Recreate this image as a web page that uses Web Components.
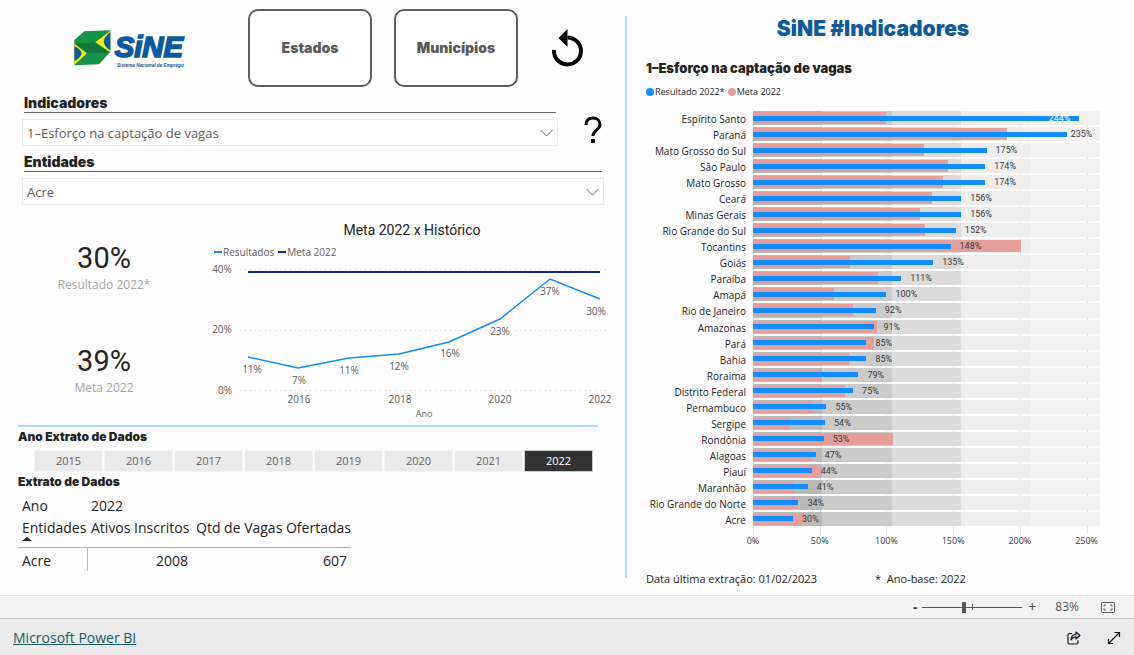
<!DOCTYPE html>
<html lang="pt-BR">
<head>
<meta charset="utf-8">
<meta name="viewport" content="width=device-width, initial-scale=1">
<title>SiNE #Indicadores</title>
<style>
  body { margin: 0; background: #fdfdfd; color: #252423; font-family: "Open Sans", "Noto Sans", sans-serif; }
</style>
</head>
<body>
<sine-app></sine-app>

<script>
const HEAD = '"Inter", "Liberation Sans", sans-serif';
const DIN = '"Roboto", sans-serif';

function define(name, render) {
  customElements.define(name, class extends HTMLElement {
    connectedCallback() {
      if (this.shadowRoot) return;
      const template = document.createElement('template');
      template.innerHTML = render(this);
      this.attachShadow({ mode: 'open' }).append(template.content.cloneNode(true));
    }
  });
}

/* ---------- Logo ---------- */
define('sine-logo', () => `
<style>
  :host { display: block; width: 116px; }
  svg { display: block; width: 100%; }
</style>
<svg viewBox="0 0 348 120" role="img" aria-label="SiNE">
  <path fill="#149247" d="M4 36 34 10 112 7V71L78 109 4 112Z"/>
  <path fill="#0d7a3c" d="M4 47 66 43 112 74 42 76Z"/>
  <path fill="#f6ea14" d="M4 47 42 76 4 111Z"/>
  <path fill="#f6ea14" d="M112 8 67 43 112 73Z"/>
  <path fill="#0b5aa0" d="M4 55Q24 64 26 77 22 90 4 99Z"/>
  <path fill="#0b5aa0" d="M112 12Q94 25 92 42 96 58 112 67Z"/>
  <text x="125" y="86" font-family="Liberation Sans" font-weight="700" font-style="italic" font-size="88" fill="#0b5aa0" stroke="#0b5aa0" stroke-width="5">SiNE</text>
  <text x="132" y="117" font-family="Liberation Sans" font-weight="700" font-style="italic" font-size="14" fill="#0b5aa0">Sistema Nacional de Emprego</text>
</svg>`);

/* ---------- Navigation button ---------- */
define('nav-button', () => `
<style>
  :host { display: block; width: 124px; }
  button { box-sizing: border-box; width: 100%; height: 78px; border: 2px solid #5f5f5f; border-radius: 10px;
    background: #fff; color: #5a5a5a; font: 900 14px/20px ${HEAD}; padding: 0; }
</style>
<button type="button"><slot></slot></button>`);

/* ---------- Icon button ---------- */
const ICONS = {
  undo: ['Redefinir', 34, 40, '<path d="M3 22A13.500 13.500 0 1 0 16.500 9.500" fill="none" stroke="#000" stroke-width="4"/><path d="M16.500 1V19L7.500 10Z" fill="#000"/>'],
  help: ['Ajuda', 22, 28, '<path d="M4 9C4 4 7 2 11 2S18 4.500 18 8.500C18 14 11 14 11 20" fill="none" stroke="#000" stroke-width="3"/><path d="M9 23H13V27H9Z" fill="#000"/>'],
  fit: ['Ajustar à página', 14, 11, '<rect x=".5" y=".5" width="13" height="10" rx="1" fill="none" stroke="#555"/><path d="M3 4.500V3H5M9 3H11V4.500M11 6.500V8H9M5 8H3V6.500" fill="none" stroke="#555"/>'],
  share: ['Compartilhar', 14, 14, '<path d="M5 2.500H2.500Q1 2.500 1 4V11.500Q1 13 2.500 13H9.500Q11 13 11 11.500V9.500" fill="none" stroke="#1c1424" stroke-width="1.200"/><path d="M9 1 13 4.500 9 8V6Q6 5.800 4 9 4 3.800 9 3Z" fill="#b9b9bd" stroke="#1c1424" stroke-width="1.100" stroke-linejoin="round"/>'],
  expand: ['Tela inteira', 14, 14, '<path d="M1.500 12.500 12.500 1.500M7.500 1.500H12.500V6M1.500 8V12.500H6" fill="none" stroke="#111" stroke-width="1.200"/>']
};
define('icon-button', el => {
  const [label, w, h, art] = ICONS[el.getAttribute('icon')];
  return `
<style>
  :host { display: block; }
  button { display: block; border: 0; padding: 0; background: none; }
  svg { display: block; }
</style>
<button type="button" aria-label="${label}"><svg width="${w}" height="${h}" viewBox="0 0 ${w} ${h}">${art}</svg></button>`;
});

/* ---------- Drop-down slicer ---------- */
define('drop-slicer', el => `
<style>
  :host { display: block; }
  label { display: block; margin: 0 2px; border-bottom: 1px solid #666; font: 900 14px/18px ${HEAD}; color: #252423; }
  .box { display: grid; margin-top: 6px; align-items: center; }
  select, svg { grid-area: 1 / 1; }
  select { box-sizing: border-box; width: 100%; height: 27px; appearance: none; border: 1px solid #eaeaea; border-radius: 0;
    background: #fff; padding: 0 24px 0 4px; font: 13px/20px "Open Sans", sans-serif; color: #605e5c; }
  svg { justify-self: end; margin-right: 5px; pointer-events: none; }
</style>
<label for="field">${el.getAttribute('label')}</label>
<div class="box">
  <select id="field"><option>${el.getAttribute('value')}</option></select>
  <svg width="13" height="8" viewBox="0 0 13 8"><path d="M.5 1 6.500 7 12.500 1" fill="none" stroke="#5b7890"/></svg>
</div>`);

/* ---------- KPI card ---------- */
define('kpi-card', el => `
<style>
  :host { display: grid; justify-items: center; align-content: center; padding-bottom: 6px; }
  .value { font: 29px/34px ${DIN}; color: #252423; }
  .name { font: 12px/20px "Open Sans", sans-serif; color: #a6a6a6; }
</style>
<div class="value">${el.getAttribute('value')}</div>
<div class="name"><slot></slot></div>`);

/* ---------- History line chart ---------- */
const HISTORY = [
  [48, 98, '11%', 52, 114], [98, 109, '7%', 99, 125], [149, 99, '11%', 149, 115], [199, 95, '12%', 199, 111],
  [249, 83, '16%', 250, 98], [300, 60, '23%', 300, 76], [350, 20, '37%', 350, 36], [400, 40, '30%', 396, 56]
];
define('history-chart', () => `
<style>
  :host { display: block; }
  h2 { margin: 0; padding: 2px 0 0 10px; text-align: center; font: 400 14px/18px ${DIN}; color: #252423; }
  .legend { display: flex; gap: 4px; margin: 6px 0 0 14px; font: 10px/14px "Open Sans", sans-serif; color: #605e5c; }
  .legend span { display: flex; align-items: center; gap: 1px; }
  .legend i { width: 8px; height: 2px; background: #118dff; }
  .legend .meta { background: #12239e; }
  svg { display: block; width: 100%; overflow: visible; }
  text { font: 10px "Open Sans", sans-serif; fill: #605e5c; text-anchor: middle; }
  .title { font-size: 9px; }
</style>
<h2>Meta 2022 x Histórico</h2>
<div class="legend"><span><i></i>Resultados</span><span><i class="meta"></i>Meta 2022</span></div>
<svg viewBox="0 0 414 162" role="img" aria-label="Meta 2022 x Histórico">
  <g stroke="#d4d4d4" stroke-dasharray="1 4"><path d="M40 10.500H408M40 71.500H408M40 131.500H408"/></g>
  <g><text x="22" y="14">40%</text><text x="22" y="74">20%</text><text x="25" y="135">0%</text></g>
  <path d="M48 13H400" stroke="#12239e" stroke-width="2"/>
  <polyline fill="none" stroke="#118dff" stroke-width="1.500" points="${HISTORY.map(p => p[0] + ',' + p[1]).join(' ')}"/>
  ${HISTORY.map(p => `<text x="${p[3]}" y="${p[4]}">${p[2]}</text>`).join('')}
  <text x="99" y="144">2016</text><text x="200" y="144">2018</text><text x="300" y="144">2020</text><text x="400" y="144">2022</text>
  <text class="title" x="224" y="158">Ano</text>
</svg>`);

/* ---------- Year tiles ---------- */
define('year-tiles', () => `
<style>
  :host { display: grid; grid-template-columns: repeat(8, 1fr); gap: 1px; }
  button { height: 22px; border: 1px solid #f4f4f4; border-radius: 0; padding: 0; background: #eaeaea; color: #666; font: 11px/18px "Open Sans", sans-serif; }
  .on { background: #333; color: #fff; border-color: #ccc; }
</style>
${[2015, 2016, 2017, 2018, 2019, 2020, 2021, 2022].map(y => `<button type="button"${y === 2022 ? ' class="on" aria-pressed="true"' : ''}>${y}</button>`).join('')}`);

/* ---------- Extract table ---------- */
define('extract-table', () => `
<style>
  :host { display: block; }
  table { width: 333px; table-layout: fixed; border-collapse: collapse; font: 14px/20px "Open Sans", sans-serif; color: #252423; }
  th, td { font-weight: 400; padding: 0 0 0 4px; text-align: left; white-space: nowrap; box-sizing: border-box; }
  thead tr:first-child th { height: 24px; }
  thead tr:last-child th { height: 29px; vertical-align: top; border-bottom: 1px solid #7fc0fa; }
  th:first-child { width: 69px; }
  th:nth-child(2) { width: 105px; }
  svg { display: block; margin-top: -1px; }
  tbody td, tbody th { height: 24px; padding-top: 3px; }
  tbody td { text-align: right; padding-right: 4px; }
  tbody th { border-right: 1px solid #8cc5f8; }
</style>
<table>
  <thead>
    <tr><th>Ano</th><th>2022</th><th></th></tr>
    <tr><th aria-sort="ascending">Entidades<svg width="10" height="4"><path d="M0 4 5 0 10 4Z" fill="#252423"/></svg></th><th>Ativos Inscritos</th><th>Qtd de Vagas Ofertadas</th></tr>
  </thead>
  <tbody><tr><th scope="row">Acre</th><td>2008</td><td>607</td></tr></tbody>
</table>`);

/* ---------- Result against target, by state ---------- */
const STATES = [
  ['Espírito Santo', 244, 100], ['Paraná', 235, 190], ['Mato Grosso do Sul', 175, 128], ['São Paulo', 174, 146],
  ['Mato Grosso', 174, 142], ['Ceará', 156, 134], ['Minas Gerais', 156, 125], ['Rio Grande do Sul', 152, 129],
  ['Tocantins', 148, 201], ['Goiás', 135, 73], ['Paraíba', 111, 94], ['Amapá', 100, 61], ['Rio de Janeiro', 92, 75],
  ['Amazonas', 91, 93], ['Pará', 85, 91], ['Bahia', 85, 72], ['Roraima', 79, 52], ['Distrito Federal', 75, 69],
  ['Pernambuco', 55, 45], ['Sergipe', 54, 28], ['Rondônia', 53, 105], ['Alagoas', 47, 44], ['Piauí', 44, 52],
  ['Maranhão', 41, 31], ['Rio Grande do Norte', 34, 34], ['Acre', 30, 39]
];
define('state-chart', () => `
<style>
  :host { display: block; --max: 260; }
  .legend { display: flex; gap: 3px; font: 9px/14px "Open Sans", sans-serif; color: #252423; }
  .legend span { display: flex; align-items: center; gap: 1px; }
  .legend i { width: 8px; height: 8px; border-radius: 50%; background: #118dff; }
  .legend .meta { background: #e3a09a; }
  .chart { display: grid; grid-template-columns: 100px 1fr; column-gap: 7px; margin-top: 12px; }
  .names, .rows { display: grid; grid-auto-rows: 1fr; height: 417px; }
  .names { justify-items: end; align-items: center; font: 10px/14px "Open Sans", sans-serif; white-space: nowrap; }
  .plot { background: repeating-linear-gradient(90deg, #e4e4e4 0 1px, transparent 1px calc(100% * 50 / var(--max))); padding-bottom: 6px; }
  .row { display: grid; align-items: center; margin-bottom: 2px;
    background: linear-gradient(90deg, #b9b9b9 20%, #cbcbcb 20% 40%, #dcdcdc 40% 60%, #ededed 60% 80%, #f2f2f2 80%); }
  .row > * { grid-area: 1 / 1; }
  .meta-bar { height: 12px; width: calc(100% * var(--m) / var(--max)); background: #e3a09a; }
  .bar { height: 5px; width: calc(100% * var(--v) / var(--max)); background: #118dff; }
  .value { margin-left: calc(100% * var(--v) / var(--max) + 9px); font: 9px/12px ${DIN}; color: #3a3a3a; }
  .near { margin-left: calc(100% * var(--v) / var(--max) + 4px); }
  .inside { margin-left: calc(100% * var(--v) / var(--max) - 30px); color: #fff; }
  .axis { grid-column: 2; display: flex; margin-left: calc(-100% * 25 / var(--max)); font: 9px/14px "Open Sans", sans-serif; color: #3a3a3a; }
  .axis span { flex: none; width: calc(100% * 50 / (var(--max) + 25)); text-align: center; }
</style>
<div class="legend"><span><i></i>Resultado 2022*</span><span><i class="meta"></i>Meta 2022</span></div>
<div class="chart">
  <div class="names">${STATES.map(s => `<span>${s[0]}</span>`).join('')}</div>
  <div class="plot"><div class="rows">${STATES.map((s, i) => `
    <div class="row" style="--v:${s[1]};--m:${s[2]}"><div class="meta-bar"></div><div class="bar"></div><span class="value ${['inside', 'near'][i] || ''}">${s[1]}%</span></div>`).join('')}
  </div></div>
  <div class="axis">${[0, 50, 100, 150, 200, 250].map(n => `<span>${n}%</span>`).join('')}</div>
</div>`);

/* ---------- Zoom bar ---------- */
define('zoom-bar', () => `
<style>
  :host { display: flex; align-items: center; height: 22px; padding-right: 19px; border-top: 1px solid #e0e0e0; border-bottom: 1px solid #c6c6c6;
    background: #f3f3f3; color: #555; justify-content: flex-end; }
  button { border: 0; background: none; padding: 0; width: 10px; color: #444; font: 14px/20px "Open Sans", sans-serif; }
  button:first-of-type { font-weight: 700; }
  input { appearance: none; width: 100px; height: 12px; margin: 0 5px 0 2px;
    background: linear-gradient(#555, #555) 50px 50% / 1px 6px no-repeat, linear-gradient(#555, #555) 0 50% / 100% 1px no-repeat; }
  input::-webkit-slider-thumb { appearance: none; width: 4px; height: 11px; background: #555; }
  output { margin: 0 22px 0 18px; font: 12px/20px "Open Sans", sans-serif; }
</style>
<button type="button" aria-label="Reduzir">-</button>
<input type="range" aria-label="Zoom" min="0" max="100" value="41">
<button type="button" aria-label="Ampliar">+</button>
<output>83%</output>
<icon-button icon="fit"></icon-button>`);

/* ---------- Footer ---------- */
define('report-footer', () => `
<style>
  :host { display: flex; align-items: center; height: 36px; padding: 2px 13px 0; box-sizing: border-box; background: #eaeaea; }
  a { color: #1b5c63; font: 14px/20px "Open Sans", sans-serif; margin-right: auto; }
  icon-button + icon-button { margin-left: 26px; }
</style>
<a href="#powerbi">Microsoft Power BI</a>
<icon-button icon="share"></icon-button>
<icon-button icon="expand"></icon-button>`);

/* ---------- Page ---------- */
define('sine-app', () => `
<style>
  :host { display: flex; flex-direction: column; min-height: 100vh; }
  main { flex: 1; display: grid; grid-template-columns: 625fr 509fr; }
  .left { padding: 9px 21px 0 18px; }
  header { display: flex; align-items: center; }
  sine-logo { margin: 0 59px 0 55px; }
  nav-button + nav-button { margin: 0 33px 0 22px; }
  .filter { display: flex; align-items: center; margin: 7px 0 0 4px; }
  .filter drop-slicer { flex: 1; }
  .filter icon-button { margin: 20px 0 0 24px; }
  .summary { display: grid; grid-template-columns: 172px 1fr; margin-top: 14px; height: 206px; border-bottom: 2px solid #b9dafb; margin-right: 6px; }
  .cards { display: grid; grid-template-rows: 104px 102px; }
  history-chart { margin: 0 -16px 0 10px; }
  h3 { margin: 0; font: 900 12px/16px ${HEAD}; }
  .summary + h3 { margin-top: 2px; }
  year-tiles { margin: 5px 11px 2px 16px; }
  extract-table { margin-top: 4px; }
  .right { margin: 16px 34px 8px 0; padding: 1px 0 0 21px; background: linear-gradient(#b9dafb, #b9dafb) 0 0 / 2px calc(100% - 9px) no-repeat; }
  h1 { margin: 0; text-align: center; color: #0f5a9c; font: 900 21px/24px ${HEAD}; }
  .right h2 { margin: 18px 0 8px; font: 900 13px/18px ${HEAD}; }
  .notes { display: grid; grid-template-columns: 229px 1fr; margin-top: 23px; font-size: 11px; line-height: 16px; }
</style>
<main>
  <section class="left">
    <header>
      <sine-logo></sine-logo>
      <nav-button>Estados</nav-button>
      <nav-button>Municípios</nav-button>
      <icon-button icon="undo"></icon-button>
    </header>
    <div class="filter">
      <drop-slicer label="Indicadores" value="1–Esforço na captação de vagas"></drop-slicer>
      <icon-button icon="help"></icon-button>
    </div>
    <div class="filter"><drop-slicer label="Entidades" value="Acre"></drop-slicer></div>
    <div class="summary">
      <div class="cards">
        <kpi-card value="30%">Resultado 2022*</kpi-card>
        <kpi-card value="39%">Meta 2022</kpi-card>
      </div>
      <history-chart></history-chart>
    </div>
    <h3>Ano Extrato de Dados</h3>
    <year-tiles></year-tiles>
    <h3>Extrato de Dados</h3>
    <extract-table></extract-table>
  </section>
  <section class="right">
    <h1>SiNE #Indicadores</h1>
    <h2>1–Esforço na captação de vagas</h2>
    <state-chart></state-chart>
    <div class="notes"><span>Data última extração: 01/02/2023</span><span>*&nbsp; Ano-base: 2022</span></div>
  </section>
</main>
<zoom-bar></zoom-bar>
<report-footer></report-footer>`);
</script>
</body>
</html>
